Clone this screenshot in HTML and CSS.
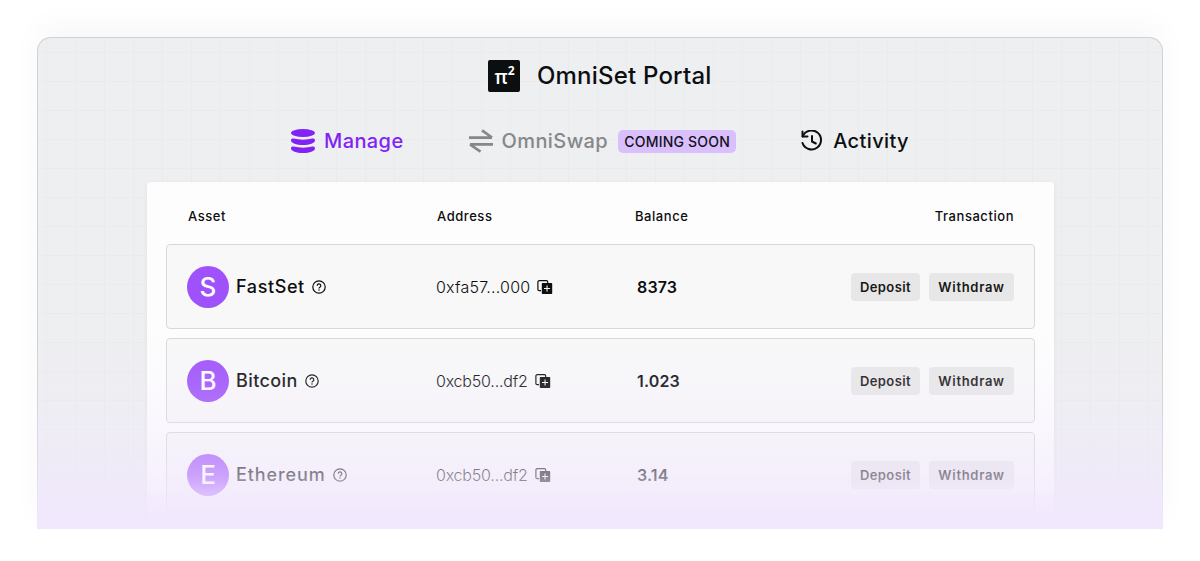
FILE: index.html
```
<!DOCTYPE html>
<html lang="en">
<head>
  <meta charset="UTF-8">
  <meta name="viewport" content="width=device-width, initial-scale=1.0">
  <title>OmniSet Portal</title>
  <link rel="stylesheet" href="styles.css">
</head>
<body>
  <!-- shared icons -->
  <svg class="sprite" width="0" height="0">
    <symbol id="help" viewBox="0 0 14 14">
      <circle cx="7" cy="7" r="6.200" fill="none" stroke="currentColor" stroke-width="1.2"/>
      <path d="M5.2 5.700a1.8 1.8 0 1 1 2.700 1.500c-.6.350-.9.600-.9 1.200" fill="none" stroke="currentColor" stroke-width="1.2"/>
      <circle cx="7" cy="10" r=".75" fill="currentColor"/>
    </symbol>
    <symbol id="copy" viewBox="0 0 16 14">
      <path d="M4 10.600H2.100a1.200 1.200 0 0 1-1.200-1.200V1.900A1.200 1.200 0 0 1 2.100.7h7.400a1.200 1.200 0 0 1 1.200 1.200v1.200" fill="none" stroke="currentColor" stroke-width="1.2"/>
      <path fill-rule="evenodd" d="M5.500 3H14.500a.7.7 0 0 1 .7.7v9.600a.7.7 0 0 1-.7.7H5.500a.7.7 0 0 1-.7-.7V3.700a.7.7 0 0 1 .7-.7zM9.500 5.500V8H7v1.100h2.500v2.500h1.100V9.100h2.500V8h-2.500V5.500z" fill="currentColor"/>
    </symbol>
  </svg>

  <div class="portal">
    <header class="brand">
      <div class="logo">π<sup>2</sup></div>
      <h1>OmniSet Portal</h1>
    </header>

    <nav class="tabs">
      <a class="tab active">
        <svg width="24" height="24" viewBox="0 0 24 24" fill="currentColor">
          <ellipse cx="12" cy="4" rx="12" ry="4"/>
          <path d="M0 11.500C0 10 1 9.400 2.500 9.600c6 1.500 13 1.500 19 0 1.500-.2 2.500.4 2.500 1.900 0 2.600-5.400 4.500-12 4.500S0 14.100 0 11.500z"/>
          <path d="M0 19.500C0 18 1 17.400 2.500 17.600c6 1.500 13 1.500 19 0 1.500-.2 2.500.4 2.500 1.900 0 2.600-5.400 4.500-12 4.500S0 22.100 0 19.500z"/>
        </svg>
        <span>Manage</span>
      </a>
      <a class="tab disabled">
        <svg width="24" height="24" viewBox="0 0 24 24" fill="none" stroke="currentColor" stroke-width="2.700">
          <path d="M0 8.700h23M13 1.300l10 7.200"/>
          <path d="M24 15.300H1M1 15.500l10.500 7.200"/>
        </svg>
        <span>OmniSwap</span>
        <span class="badge">COMING SOON</span>
      </a>
      <a class="tab">
        <svg class="history" width="22" height="22" viewBox="0 0 22 22" fill="none" stroke="currentColor" stroke-width="2" stroke-linecap="round" stroke-linejoin="round">
          <path d="M1.500 1.500v5h5"/>
          <path d="M1.700 6.400A9.500 9.500 0 1 1 1.500 13"/>
          <path d="M11 6v5.500l3.800 2"/>
        </svg>
        <span>Activity</span>
      </a>
    </nav>

    <main class="card">
      <div class="cols head">
        <span>Asset</span>
        <span>Address</span>
        <span class="head-balance">Balance</span>
        <span>Transaction</span>
      </div>

      <div class="cols row">
        <div class="asset"><span class="coin">S</span><span class="fastset">FastSet</span><svg class="help"><use href="#help"/></svg></div>
        <div class="address">0xfa57...000<svg class="copy"><use href="#copy"/></svg></div>
        <div class="balance">8373</div>
        <div class="actions"><button class="deposit">Deposit</button><button class="withdraw">Withdraw</button></div>
      </div>

      <div class="cols row">
        <div class="asset"><span class="coin">B</span><span class="bitcoin">Bitcoin</span><svg class="help"><use href="#help"/></svg></div>
        <div class="address tight">0xcb50...df2<svg class="copy"><use href="#copy"/></svg></div>
        <div class="balance">1.023</div>
        <div class="actions"><button class="deposit">Deposit</button><button class="withdraw">Withdraw</button></div>
      </div>

      <div class="cols row">
        <div class="asset"><span class="coin">E</span><span class="ethereum">Ethereum</span><svg class="help"><use href="#help"/></svg></div>
        <div class="address tight">0xcb50...df2<svg class="copy"><use href="#copy"/></svg></div>
        <div class="balance">3.14</div>
        <div class="actions"><button class="deposit">Deposit</button><button class="withdraw">Withdraw</button></div>
      </div>
    </main>
    <div class="fade"></div>
  </div>
</body>
</html>
```
FILE: styles.css
```
* {
  box-sizing: border-box;
}

body {
  margin: 0;
  padding: 37px 37px 32px;
  height: 561px;
  overflow: hidden;
  background: #fff;
  color: #0c0e10;
  font-family: Inter, "Liberation Sans", sans-serif;
}

svg {
  flex: none;
}

.sprite {
  display: none;
}

.portal {
  position: relative;
  width: 1126px;
  height: 492px;
  border: 1px solid #cfd1d4;
  border-bottom: 0;
  border-radius: 14px 14px 0 0;
  background-color: #eeeff1;
  background-image:
    linear-gradient(to right, #eaebed 1px, transparent 1px),
    linear-gradient(to bottom, #eaebed 1px, transparent 1px);
  background-size: 29px 29px;
  background-position: 8px 14px;
  box-shadow: 0 -12px 30px rgba(0, 0, 0, 0.03);
  clip-path: inset(-37px -37px 0 -37px);
}

.brand {
  display: flex;
  align-items: center;
  gap: 17px;
  height: 32px;
  margin: 22px 0 0 450px;
}

.logo {
  display: flex;
  justify-content: center;
  width: 32px;
  height: 32px;
  padding-left: 1px;
  border-radius: 2px;
  background: #0c0f10;
  color: #fff;
  font: 600 19px/34px "Open Sans", sans-serif;
}

.logo sup {
  font-size: 12px;
  font-weight: 700;
  line-height: 21px;
}

h1 {
  margin: 0;
  font-size: 24px;
  font-weight: 500;
  line-height: 32px;
  letter-spacing: 0.2px;
  white-space: nowrap;
}

.tabs {
  display: flex;
  align-items: center;
  gap: 65px;
  height: 24px;
  margin: 37px 0 0 253px;
  font-size: 20px;
  font-weight: 500;
  line-height: 24px;
  letter-spacing: 0.4px;
}

.tab {
  display: flex;
  align-items: center;
  gap: 9px;
  white-space: nowrap;
}

.active {
  color: #8223f5;
}

.disabled {
  color: #86878a;
}

.history {
  margin-right: 1px;
}

.badge {
  width: 118px;
  height: 23px;
  margin-left: 1px;
  border-radius: 5px;
  background: #d9c0fc;
  color: #15101c;
  font-size: 14px;
  line-height: 23px;
  letter-spacing: 0.2px;
  text-align: center;
}

.card {
  width: 907px;
  height: 347px;
  margin: 29px 0 0 109px;
  padding: 0 19px;
  overflow: hidden;
  border-radius: 4px 4px 0 0;
  background: #fdfdfd;
  box-shadow: 0 1px 5px rgba(0, 0, 0, 0.06);
}

.cols {
  display: grid;
  grid-template-columns: 249px 201px 1fr auto;
  align-items: center;
  padding: 0 20px;
  white-space: nowrap;
}

.head {
  height: 62px;
  padding: 5px 21px 0 22px;
  font-size: 13px;
  font-weight: 500;
  letter-spacing: 0.55px;
}

.head-balance {
  margin-left: -3px;
}

.row {
  height: 85px;
  margin-bottom: 9px;
  border: 1px solid #d8d8d9;
  border-radius: 4px;
  background: #f8f8f8;
}

.asset,
.address,
.actions {
  display: flex;
  align-items: center;
}

.asset {
  font-size: 18px;
  font-weight: 500;
}

.fastset {
  letter-spacing: 0.6px;
}

.bitcoin {
  letter-spacing: 0.4px;
}

.ethereum {
  letter-spacing: 0.9px;
}

.coin {
  width: 42px;
  height: 42px;
  margin-right: 7px;
  border-radius: 50%;
  background: #9f52fb;
  color: #fff;
  font-size: 26px;
  line-height: 42px;
  text-align: center;
}

.help {
  width: 14px;
  height: 14px;
  margin-left: 7px;
}

.address {
  font-size: 16px;
  font-weight: 300;
  letter-spacing: 0.2px;
}

.tight {
  letter-spacing: -0.2px;
}

.copy {
  width: 16px;
  height: 14px;
  margin-left: 7px;
}

.balance {
  font-size: 16px;
  font-weight: 600;
  letter-spacing: 0.15px;
}

.actions {
  gap: 9px;
}

button {
  height: 28px;
  padding: 0;
  border: 0;
  border-radius: 4px;
  background: #e7e7e7;
  color: #171819;
  font: 600 13px/28px Inter, "Liberation Sans", sans-serif;
}

.deposit {
  width: 69px;
  letter-spacing: 0.4px;
}

.withdraw {
  width: 85px;
  letter-spacing: 0.7px;
}

/* purple wash that dissolves the list */
.fade {
  position: absolute;
  inset: 290px -1px 0;
  background: linear-gradient(
    rgba(241, 231, 254, 0) 0,
    rgba(241, 231, 254, 0.13) 53px,
    rgba(241, 231, 254, 0.3) 103px,
    rgba(241, 231, 254, 0.53) 147px,
    rgba(241, 231, 254, 0.95) 187px,
    #f1e7fe 201px
  );
}
```
